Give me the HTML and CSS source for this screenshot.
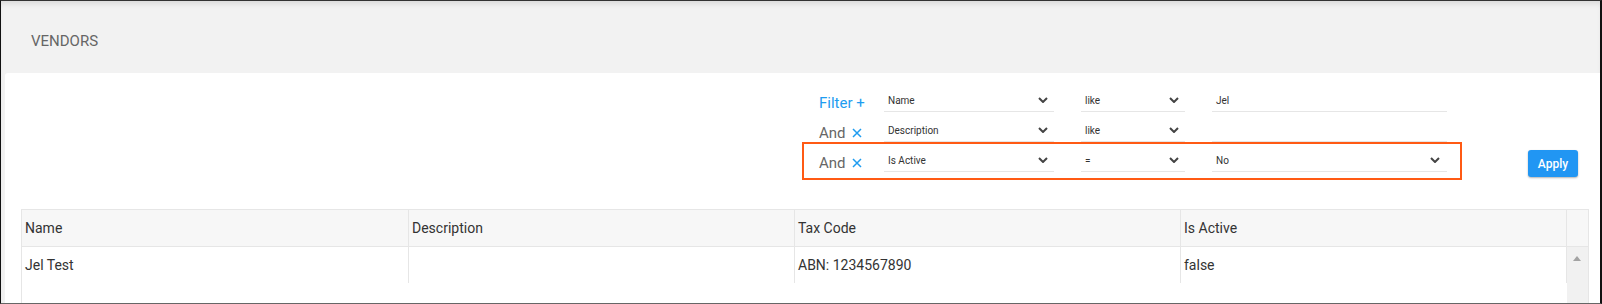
FILE: index.html
```html
<!DOCTYPE html>
<html>
<head>
  <title>Vendors</title>
  <link rel="stylesheet" href="styles.css">
</head>
<body>
  <div class="frame">
    <div class="page-head">VENDORS</div>
    <div class="panel">
      <div class="filters">
        <div class="filter-rows">
          <div class="filter-row">
            <span class="flabel blue">Filter +</span>
            <div class="sel">Name<svg class="chev" width="10" height="6" viewBox="0 0 10 6"><path d="M1 1 L5 5 L9 1" fill="none" stroke="#444" stroke-width="2"/></svg></div>
            <div class="sel">like<svg class="chev" width="10" height="6" viewBox="0 0 10 6"><path d="M1 1 L5 5 L9 1" fill="none" stroke="#444" stroke-width="2"/></svg></div>
            <div class="sel">Jel</div>
          </div>
          <div class="filter-row">
            <span class="flabel">And <svg class="x" width="10" height="10" viewBox="0 0 10 10"><path d="M1 1 L9 9 M9 1 L1 9" stroke="#1e9cf0" stroke-width="1.5"/></svg></span>
            <div class="sel">Description<svg class="chev" width="10" height="6" viewBox="0 0 10 6"><path d="M1 1 L5 5 L9 1" fill="none" stroke="#444" stroke-width="2"/></svg></div>
            <div class="sel">like<svg class="chev" width="10" height="6" viewBox="0 0 10 6"><path d="M1 1 L5 5 L9 1" fill="none" stroke="#444" stroke-width="2"/></svg></div>
            <div class="sel"></div>
          </div>
          <div class="filter-row marked">
            <span class="flabel">And <svg class="x" width="10" height="10" viewBox="0 0 10 10"><path d="M1 1 L9 9 M9 1 L1 9" stroke="#1e9cf0" stroke-width="1.5"/></svg></span>
            <div class="sel">Is Active<svg class="chev" width="10" height="6" viewBox="0 0 10 6"><path d="M1 1 L5 5 L9 1" fill="none" stroke="#444" stroke-width="2"/></svg></div>
            <div class="sel">=<svg class="chev" width="10" height="6" viewBox="0 0 10 6"><path d="M1 1 L5 5 L9 1" fill="none" stroke="#444" stroke-width="2"/></svg></div>
            <div class="sel wide">No<svg class="chev" width="10" height="6" viewBox="0 0 10 6"><path d="M1 1 L5 5 L9 1" fill="none" stroke="#444" stroke-width="2"/></svg></div>
            <div class="highlight"></div>
          </div>
        </div>
        <button class="apply">Apply</button>
      </div>

      <div class="grid">
        <div class="grid-head">
          <div class="cell">Name</div>
          <div class="cell">Description</div>
          <div class="cell">Tax Code</div>
          <div class="cell">Is Active</div>
          <div class="cell spacer"></div>
        </div>
        <div class="grid-body">
          <div class="rows">
            <div class="row">
              <div class="cell">Jel Test</div>
              <div class="cell"></div>
              <div class="cell">ABN: 1234567890</div>
              <div class="cell">false</div>
            </div>
          </div>
          <div class="scrollbar"><span class="arrow"></span></div>
        </div>
      </div>
    </div>
  </div>
</body>
</html>
```

FILE: styles.css
```css
body {
  margin: 0;
  font-family: Roboto, "Liberation Sans", sans-serif;
  background: #fff;
}
.frame {
  width: 1602px;
  height: 304px;
  box-sizing: border-box;
  border-left: 1px solid #111;
  border-right: 2px solid #111;
  border-top: 1px solid #333;
  border-bottom: 1px solid #666;
  background-color: #f2f2f2;
  box-shadow: inset 0 5px 6px -3px rgba(0, 0, 0, 0.12);
  display: flex;
  flex-direction: column;
  overflow: hidden;
}
.page-head {
  height: 72px;
  flex-shrink: 0;
  padding-left: 30px;
  line-height: 80px;
  font-size: 15px;
  color: #666;
}
.panel {
  flex: 1;
  margin-left: 4px;
  background-color: #fff;
  border-top-left-radius: 3px;
  padding: 16px 11px 0 16px;
  display: flex;
  flex-direction: column;
}
.filters {
  display: flex;
  justify-content: flex-end;
  padding-right: 11px;
  height: 120px;
  flex-shrink: 0;
}
.filter-rows {
  display: flex;
  flex-direction: column;
}
.filter-row {
  display: grid;
  grid-template-columns: 38px 170px 104px 235px;
  column-gap: 27px;
  height: 30px;
  position: relative;
}
.flabel {
  font-size: 15px;
  color: #666;
  padding-top: 2px;
  display: flex;
  align-items: center;
  gap: 6px;
  height: 23px;
  white-space: nowrap;
}
.flabel.blue {
  color: #1e9cf0;
}
.x {
  flex-shrink: 0;
  margin-top: 1px;
}
.chev {
  flex-shrink: 0;
}
.sel {
  height: 22px;
  border-bottom: 1px solid #e6e6e6;
  font-size: 10px;
  color: #333;
  padding: 0 6px 0 4px;
  display: flex;
  align-items: center;
  justify-content: space-between;
}
.sel.wide {
  padding-right: 7px;
}
.highlight {
  position: absolute;
  left: -17px;
  top: -7px;
  width: 660px;
  height: 38px;
  box-sizing: border-box;
  border: 2px solid #ff5a14;
}
.apply {
  align-self: flex-start;
  margin-top: 61px;
  margin-left: 81px;
  width: 50px;
  height: 27px;
  border: none;
  border-radius: 3px;
  background-color: #2196f3;
  color: #fff;
  font-family: Roboto, "Liberation Sans", sans-serif;
  font-size: 12px;
  font-weight: 500;
  box-shadow: 0 1px 2px rgba(0, 0, 0, 0.3);
  padding: 0;
}
.grid {
  flex: 1;
  border: 1px solid #e6e6e6;
  border-bottom: none;
  display: flex;
  flex-direction: column;
  font-size: 14px;
  color: #333;
}
.grid-head {
  display: flex;
  background-color: #f7f7f7;
  border-bottom: 1px solid #e6e6e6;
}
.cell {
  width: 386px;
  height: 36px;
  line-height: 36px;
  padding: 0 3px;
  box-sizing: border-box;
  border-right: 1px solid #e6e6e6;
  white-space: nowrap;
}
.grid-head .cell:first-child,
.row .cell:first-child {
  width: 387px;
}
.grid-head .spacer {
  width: 21px;
  border-right: none;
  padding: 0;
}
.grid-body {
  flex: 1;
  display: flex;
}
.rows {
  flex: 1;
}
.row {
  display: flex;
}
.scrollbar {
  width: 21px;
  background-color: #f1f1f1;
  position: relative;
}
.arrow {
  position: absolute;
  left: 6px;
  top: 9px;
  width: 0;
  height: 0;
  border-left: 4px solid transparent;
  border-right: 4px solid transparent;
  border-bottom: 5px solid #a3a3a3;
}
```
